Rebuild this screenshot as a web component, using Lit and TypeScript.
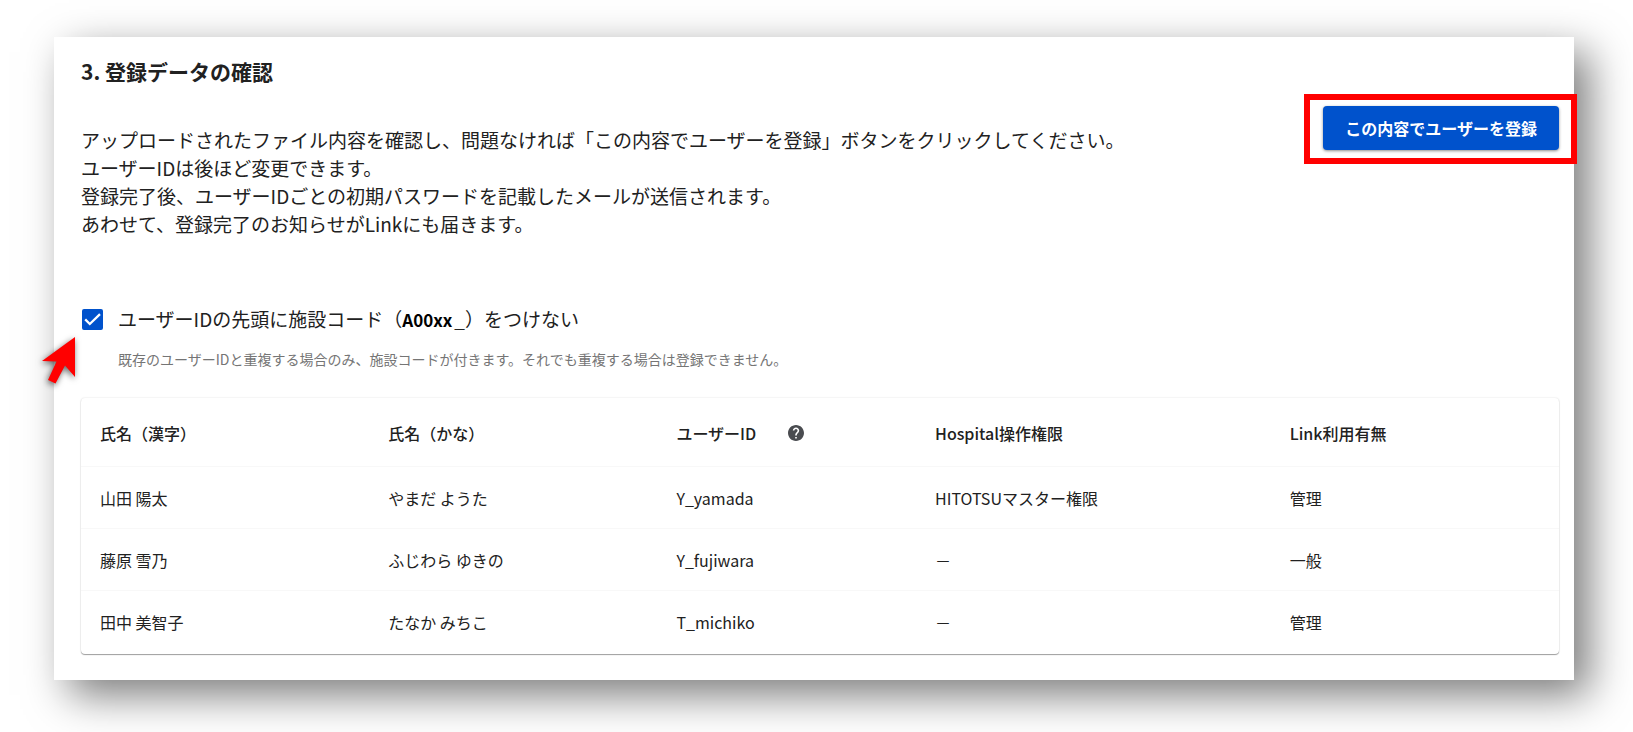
import { LitElement, html, css } from "lit";
import { customElement, property, state } from "lit/decorators.js";

interface UserRow {
  name: string;
  kana: string;
  id: string;
  role: string;
  link: string;
}

const USERS: UserRow[] = [
  { name: "山田 陽太", kana: "やまだ ようた", id: "Y_yamada", role: "HITOTSUマスター権限", link: "管理" },
  { name: "藤原 雪乃", kana: "ふじわら ゆきの", id: "Y_fujiwara", role: "－", link: "一般" },
  { name: "田中 美智子", kana: "たなか みちこ", id: "T_michiko", role: "－", link: "管理" },
];

@customElement("user-table")
export class UserTable extends LitElement {
  @property({ attribute: false }) users: UserRow[] = [];

  static styles = css`
    :host {
      display: block;
      border-radius: 4px;
      background: #fff;
      box-shadow: 0 1px 1px rgba(0, 0, 0, 0.36), 0 0 2px rgba(0, 0, 0, 0.14);
    }
    .table {
      width: 100%;
      border-collapse: separate;
      border-spacing: 0;
      table-layout: fixed;
      font-size: 16px;
      line-height: 24px;
      color: #212121;
    }
    .narrow {
      width: 17.5%;
    }
    .base {
      width: 19.5%;
    }
    .wide {
      width: 24%;
    }
    th,
    td {
      padding: 19px 19px 18px;
      text-align: left;
      border-bottom: 1px solid #f8f8f8;
    }
    th {
      padding: 23px 19px 21px;
      font-weight: 500;
    }
    tbody tr:last-child td {
      border-bottom: 0;
      padding-bottom: 20px;
    }
    .with-help {
      display: flex;
      align-items: center;
      gap: 32px;
    }
    .help {
      display: flex;
      padding: 0;
      border: 0;
      background: none;
      color: #4a4c50;
    }
  `;

  render() {
    return html`
      <table class="table">
        <colgroup>
          <col class="base" />
          <col class="base" />
          <col class="narrow" />
          <col class="wide" />
          <col class="base" />
        </colgroup>
        <thead>
          <tr>
            <th scope="col">氏名（漢字）</th>
            <th scope="col">氏名（かな）</th>
            <th scope="col">
              <div class="with-help">
                <span>ユーザーID</span>
                <button class="help" type="button" aria-label="ヘルプ">
                  <svg width="16" height="16" viewBox="2 2 20 20" fill="currentColor" aria-hidden="true">
                    <path
                      d="M12 2C6.48 2 2 6.48 2 12s4.48 10 10 10 10-4.48 10-10S17.52 2 12 2zm1 17h-2v-2h2v2zm2.07-7.75l-.9.92C13.45 12.9 13 13.5 13 15h-2v-.5c0-1.1.45-2.1 1.17-2.83l1.24-1.26c.37-.36.59-.86.59-1.41 0-1.1-.9-2-2-2s-2 .9-2 2H8c0-2.21 1.79-4 4-4s4 1.79 4 4c0 .88-.36 1.68-.93 2.25z"
                    />
                  </svg>
                </button>
              </div>
            </th>
            <th scope="col">Hospital操作権限</th>
            <th scope="col">Link利用有無</th>
          </tr>
        </thead>
        <tbody>
          ${this.users.map(
            (u) => html`<tr>
              <td>${u.name}</td>
              <td>${u.kana}</td>
              <td>${u.id}</td>
              <td>${u.role}</td>
              <td>${u.link}</td>
            </tr>`
          )}
        </tbody>
      </table>
    `;
  }
}

@customElement("app-root")
export class AppRoot extends LitElement {
  @state() private withoutPrefix = true;

  static styles = css`
    :host {
      display: block;
      box-sizing: border-box;
      min-height: 100vh;
      overflow: hidden;
      padding: 37px 59px 52px 54px;
      background: #fff;
      color: #212121;
      font-family: "Noto Sans CJK JP", "Noto Sans", sans-serif;
    }
    .card {
      padding: 19px 15px 26px 27px;
      background: #fff;
      box-shadow: 15px 15px 40px rgba(0, 0, 0, 0.52);
    }
    .title {
      margin: 0;
      font-size: 21px;
      line-height: 30px;
      font-weight: 700;
    }
    .intro {
      display: flex;
      align-items: flex-start;
      justify-content: space-between;
      gap: 24px;
      margin-top: 20px;
    }
    .lead {
      margin: 0;
      padding-top: 20px;
      font-size: 19px;
      line-height: 28px;
    }
    .action {
      position: relative;
      flex: none;
    }
    .action::after {
      content: "";
      position: absolute;
      inset: -12px -18px -14px -19px;
      border: 6px solid #f00;
      pointer-events: none;
    }
    .submit {
      display: block;
      padding: 10px 22px;
      border: 0;
      border-radius: 4px;
      background: #0052cc;
      box-shadow: 0 1px 3px rgba(0, 0, 0, 0.45);
      color: #fff;
      font-family: inherit;
      font-size: 16px;
      line-height: 24px;
      font-weight: 700;
    }
    .option {
      display: grid;
      grid-template-columns: 21px 1fr;
      column-gap: 15px;
      align-items: center;
      margin: 66px 0 27px;
      padding-left: 1px;
    }
    .box {
      position: relative;
      display: flex;
      height: 21px;
    }
    .check {
      appearance: none;
      width: 21px;
      height: 21px;
      margin: 0;
      border: 2px solid #0052cc;
      border-radius: 2px;
      background: #fff;
    }
    .check:checked {
      background: #0052cc;
    }
    .tick {
      position: absolute;
      inset: 0;
      pointer-events: none;
    }
    .pointer {
      position: absolute;
      top: 24px;
      right: 28px;
      filter: drop-shadow(-1px 2px 3px rgba(0, 0, 0, 0.6));
      pointer-events: none;
    }
    .label {
      font-size: 19px;
      line-height: 30px;
    }
    .code {
      margin: 0 2px 0 0;
      color: #000;
      font-size: 17px;
      font-weight: 700;
    }
    .note {
      grid-column: 2;
      margin: 12px 0 0;
      color: #757575;
      font-size: 14px;
      line-height: 24px;
    }
  `;

  private toggle(e: Event) {
    this.withoutPrefix = (e.target as HTMLInputElement).checked;
  }

  render() {
    return html`
      <main class="card">
        <h2 class="title">3. 登録データの確認</h2>
        <div class="intro">
          <p class="lead">
            アップロードされたファイル内容を確認し、問題なければ「この内容でユーザーを登録」ボタンをクリックしてください。<br />
            ユーザーIDは後ほど変更できます。<br />
            登録完了後、ユーザーIDごとの初期パスワードを記載したメールが送信されます。<br />
            あわせて、登録完了のお知らせがLinkにも届きます。
          </p>
          <div class="action">
            <button class="submit" type="button">この内容でユーザーを登録</button>
          </div>
        </div>
        <div class="option">
          <span class="box">
            <input
              class="check"
              id="no-prefix"
              type="checkbox"
              aria-describedby="no-prefix-note"
              .checked=${this.withoutPrefix}
              @change=${this.toggle}
            />
            <svg class="tick" width="21" height="21" viewBox="0 0 21 21" fill="none" aria-hidden="true">
              <path d="M3.2 10.4 L7.8 15 L18 5.2" stroke="#fff" stroke-width="2.3" />
            </svg>
            <svg class="pointer" width="37" height="52" viewBox="0 0 37 52" aria-hidden="true">
              <path d="M37 4 V44 L27 32.5 L17.5 50.5 L10 47 L18.5 28.5 L4 28 Z" fill="#f00" />
            </svg>
          </span>
          <label class="label" for="no-prefix"
            >ユーザーIDの先頭に施設コード（<span class="code">A00xx</span>_）をつけない</label
          >
          <p class="note" id="no-prefix-note">
            既存のユーザーIDと重複する場合のみ、施設コードが付きます。それでも重複する場合は登録できません。
          </p>
        </div>
        <user-table .users=${USERS}></user-table>
      </main>
    `;
  }
}
